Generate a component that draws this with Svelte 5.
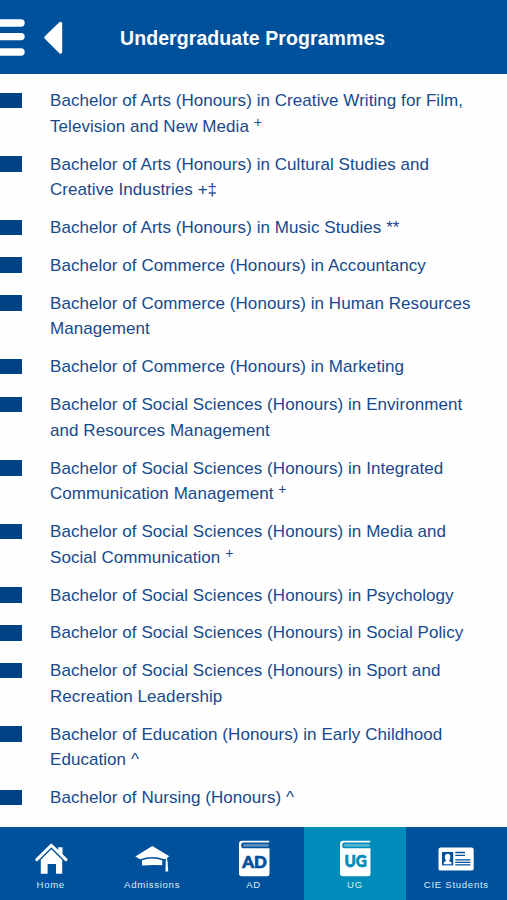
<script>
  let active = $state('ug');

  const programmes = [
    { lines: ['Bachelor of Arts (Honours) in Creative Writing for Film,', 'Television and New Media'], mark: '+' },
    { lines: ['Bachelor of Arts (Honours) in Cultural Studies and', 'Creative Industries +‡'] },
    { lines: ['Bachelor of Arts (Honours) in Music Studies **'] },
    { lines: ['Bachelor of Commerce (Honours) in Accountancy'] },
    { lines: ['Bachelor of Commerce (Honours) in Human Resources', 'Management'] },
    { lines: ['Bachelor of Commerce (Honours) in Marketing'] },
    { lines: ['Bachelor of Social Sciences (Honours) in Environment', 'and Resources Management'] },
    { lines: ['Bachelor of Social Sciences (Honours) in Integrated', 'Communication Management'], mark: '+' },
    { lines: ['Bachelor of Social Sciences (Honours) in Media and', 'Social Communication'], mark: '+' },
    { lines: ['Bachelor of Social Sciences (Honours) in Psychology'] },
    { lines: ['Bachelor of Social Sciences (Honours) in Social Policy'] },
    { lines: ['Bachelor of Social Sciences (Honours) in Sport and', 'Recreation Leadership'] },
    { lines: ['Bachelor of Education (Honours) in Early Childhood', 'Education ^'] },
    { lines: ['Bachelor of Nursing (Honours) ^'] },
  ];

  const tabs = [
    { id: 'home', label: 'Home' },
    { id: 'admissions', label: 'Admissions' },
    { id: 'ad', label: 'AD' },
    { id: 'ug', label: 'UG' },
    { id: 'students', label: 'CIE Students' },
  ];
</script>

<div class="app">
  <header>
    <button class="menu" aria-label="Menu">
      <svg width="25" height="38" viewBox="0 0 25 38">
        <path d="M-4 5H21M-4 18.6H21M-4 34H21" stroke="#fff" stroke-width="7.4" stroke-linecap="round" />
      </svg>
    </button>
    <button class="back" aria-label="Back">
      <svg width="20" height="34" viewBox="0 0 20 34">
        <path d="M3 16.5L17.5 2.5V31Z" fill="#fff" stroke="#fff" stroke-width="3.4" stroke-linejoin="round" />
      </svg>
    </button>
    <h1>Undergraduate Programmes</h1>
  </header>

  <ul class="programmes">
    {#each programmes as programme}
      <li>
        <span class="marker"></span>
        <div class="name">
          {#each programme.lines as line, i}
            <div class="line">
              {line}{#if programme.mark && i === programme.lines.length - 1}&nbsp;<span class="mark">{programme.mark}</span>{/if}
            </div>
          {/each}
        </div>
      </li>
    {/each}
  </ul>

  <nav>
    {#each tabs as tab}
      <button class="tab" class:active={active === tab.id} onclick={() => (active = tab.id)}>
        <svg width="40" height="40" viewBox="0 0 40 40">
          {#if tab.id === 'home'}
            <path d="M5.8 21.6L20.3 7.2L35 21.6" fill="none" stroke="#fff" stroke-width="3" stroke-linecap="round" stroke-linejoin="round" />
            <path d="M27.2 9.3h4.3v7.6l-4.3-4.2Z" fill="#fff" />
            <path d="M20.3 11.2L9.8 21.7V35.8H16.6V26H25V35.8H31.2V22Z" fill="#fff" />
          {:else if tab.id === 'admissions'}
            <path d="M20.3 8L37.3 18.2L32.4 21.3Q20 16.8 8 21.3L3.3 18.5Z" fill="#fff" />
            <path d="M10 22.3Q20 18.7 30.2 22.3V27.2Q20 26.8 10 27.4Z" fill="#fff" />
            <path d="M34.5 19V25" stroke="#fff" stroke-width="1.4" />
            <path d="M33.8 23h1.8l.6 10.6h-2.8Z" fill="#fff" />
          {:else if tab.id === 'ad' || tab.id === 'ug'}
            <path d="M35.2 2.8H8Q5 2.8 5 6.2V35.5Q5 38.3 7.8 38.3H33Q35.5 38.3 35.5 36V10.3H9Q7.2 10.3 7.2 7.3Q7.2 4.5 9 4.4H35.2Z" fill="#fff" />
            <path d="M9.5 6.1H34.5V8.7H9.5Q8.6 7.4 9.5 6.1Z" fill="#fff" fill-opacity="0.35" />
            {#if tab.id === 'ad'}
              <text class="badge ad" x="8.2" y="29.5" textLength="24.6" lengthAdjust="spacingAndGlyphs">AD</text>
            {:else}
              <text class="badge ug" x="9.4" y="29.3" textLength="22.4" lengthAdjust="spacingAndGlyphs">UG</text>
            {/if}
          {:else}
            <rect x="2.5" y="9.6" width="35.2" height="23" rx="2.2" fill="#fff" />
            <rect x="6" y="14" width="11.2" height="13.4" fill="#00519c" />
            <path d="M7.7 26.2V24.4L10.1 22.8Q8.6 20.9 8.8 18.2Q9 15.7 11.6 15.7T14.3 18.2Q14.5 20.9 13 22.8L15.5 24.4V26.2Z" fill="#fff" />
            <path d="M19.3 14.5H29M19.3 17.3H29M19.3 21.8H34.4M19.3 24.3H34.4M19.3 26.8H34.4" stroke="#00519c" stroke-width="1.3" />
          {/if}
        </svg>
        <span class="label">{tab.label}</span>
      </button>
    {/each}
  </nav>
</div>

<style>
  :global(body) {
    margin: 0;
    background: #fff;
  }

  .app {
    display: flex;
    flex-direction: column;
    height: 900px;
    overflow: hidden;
    font-family: "Liberation Sans", Arial, sans-serif;
    background: #fefefe;
  }

  button {
    border: none;
    padding: 0;
    background: none;
    color: inherit;
    font: inherit;
    cursor: pointer;
  }

  svg {
    display: block;
  }

  header {
    display: flex;
    align-items: flex-start;
    flex: none;
    height: 74px;
    background: #00519c;
    color: #fff;
  }

  .menu {
    padding-top: 18px;
  }

  .back {
    padding: 21px 0 0 18px;
  }

  h1 {
    margin: 25px 0 0 57px;
    font-size: 19.5px;
    line-height: 26px;
    letter-spacing: 0.08px;
    white-space: nowrap;
  }

  .programmes {
    flex: 1;
    margin: 0;
    padding: 14px 0 0;
    list-style: none;
    color: #17498c;
  }

  li {
    display: flex;
    align-items: flex-start;
    margin-bottom: 12.15px;
  }

  .marker {
    flex: none;
    width: 21.7px;
    height: 15.5px;
    margin: 4.6px 28.3px 0 0;
    background: #004385;
  }

  .line {
    height: 25.7px;
    font-size: 17px;
    line-height: 25.7px;
    letter-spacing: 0.06px;
    white-space: nowrap;
  }

  .mark {
    position: relative;
    top: -5px;
    font-size: 14px;
  }

  nav {
    display: flex;
    flex: none;
    height: 73px;
    background: #00519c;
    color: #fff;
  }

  .tab {
    display: flex;
    flex: 1;
    flex-direction: column;
    align-items: center;
    padding-top: 11px;
  }

  .tab.active {
    background: #008cba;
  }

  .label {
    margin-top: 1px;
    font-size: 9.6px;
    line-height: 12px;
    letter-spacing: 0.7px;
    color: #dcebf7;
  }

  .badge {
    font-family: Lato, sans-serif;
    font-size: 17.5px;
    font-weight: 900;
    fill: #00519c;
    stroke: #00519c;
    stroke-width: 0.7px;
  }

  .badge.ug {
    fill: #008cba;
    stroke: #008cba;
  }
</style>
